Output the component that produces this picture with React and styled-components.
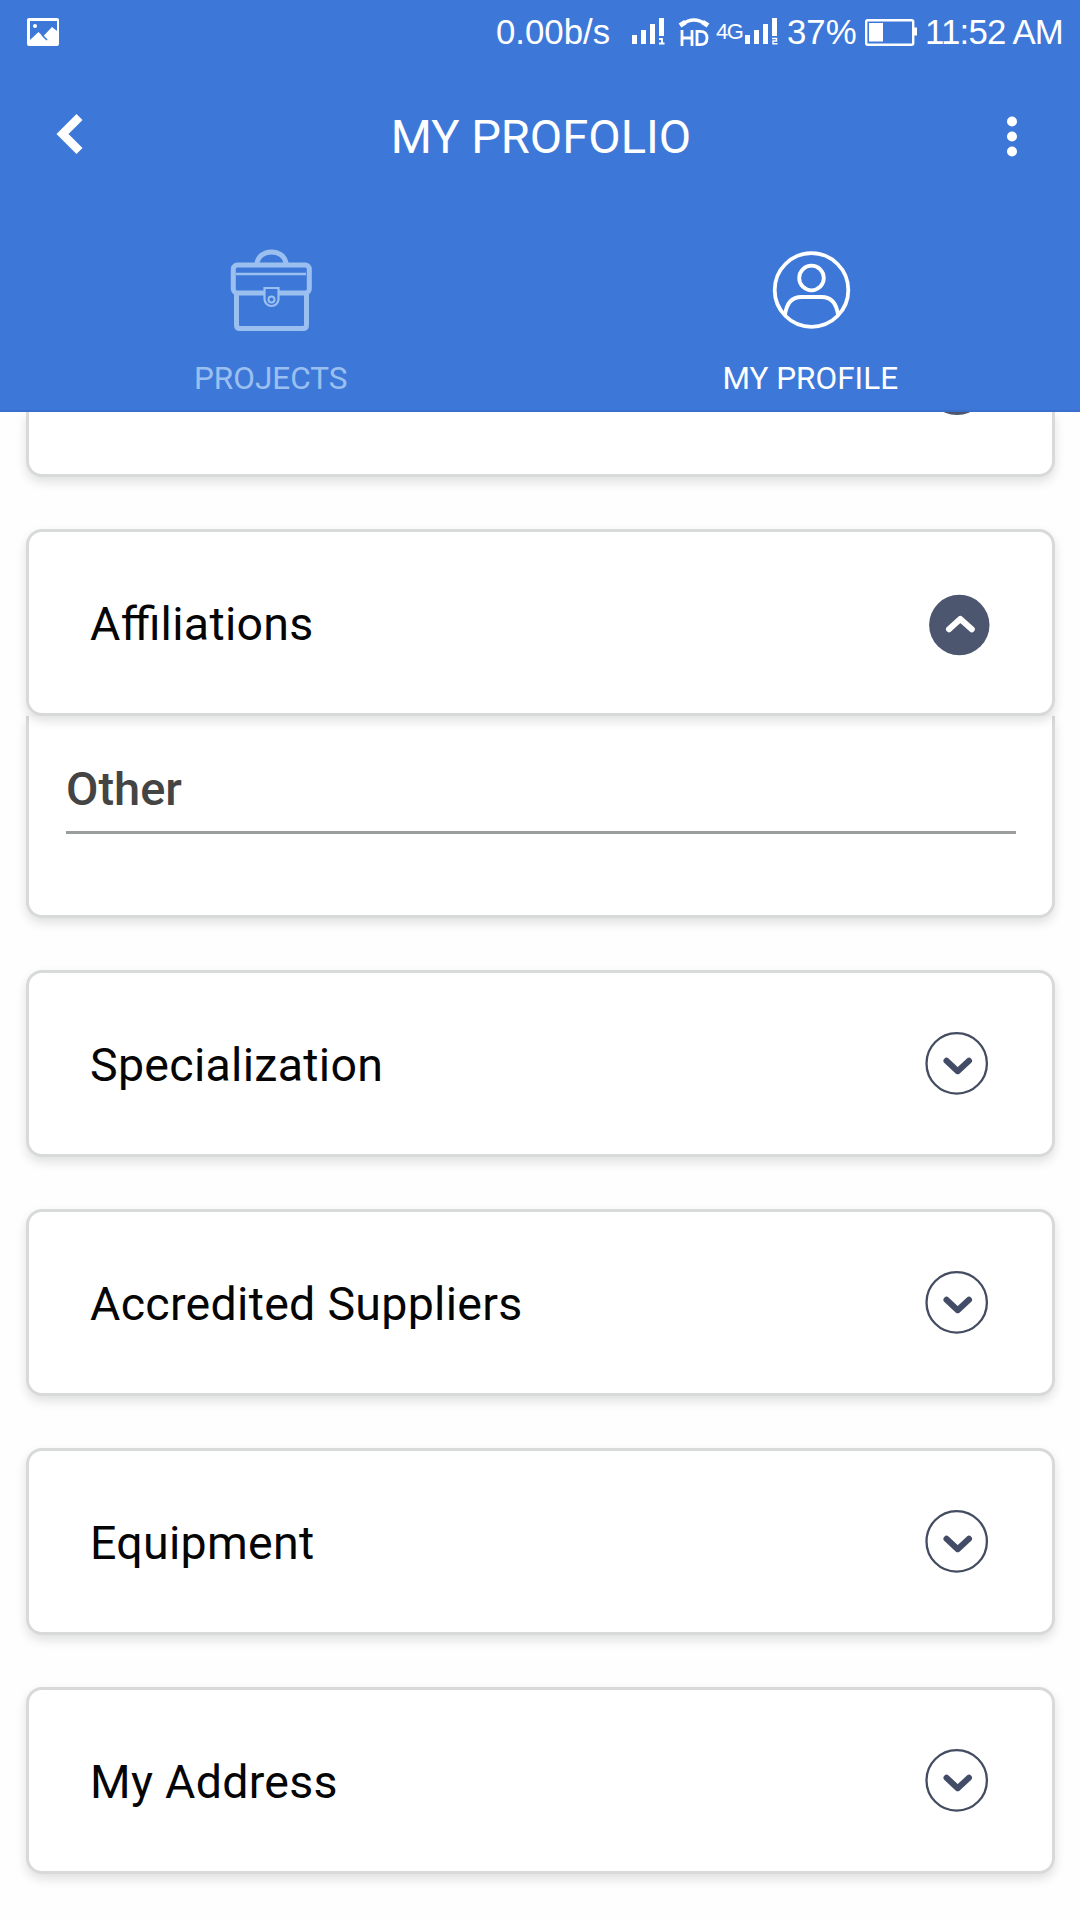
import React from 'react';
import styled, { createGlobalStyle } from 'styled-components';

const Global = createGlobalStyle`
  body { margin: 0; background: #fefefe; font-family: Roboto, sans-serif; }
  * { box-sizing: border-box; }
`;

const Screen = styled.div`
  width: 1080px;
  height: 1920px;
  overflow: hidden;
  display: flex;
  flex-direction: column;
`;

const Header = styled.header`
  flex: none;
  height: 412px;
  background: #3d78d9;
  border-bottom: 2px solid #3a70cd;
  color: #fff;
  display: flex;
  flex-direction: column;
`;

const StatusBar = styled.div`
  height: 64px;
  display: flex;
  align-items: center;
  padding: 0 17px 0 27px;
`;

const StatusText = styled.span`
  font: ${p => p.$size || 34.8}px/64px "Liberation Sans", Arial, sans-serif;
  letter-spacing: ${p => p.$spacing || 0}px;
  white-space: nowrap;
  width: ${p => p.$width}px;
  margin-left: ${p => p.$gap || 0}px;
`;

const StatusIcon = styled.svg`
  flex: none;
  display: block;
  margin-left: ${p => p.$gap || 0}px;
`;

const Spacer = styled.div`
  flex: 1;
`;

const TitleBar = styled.div`
  height: 146px;
  display: grid;
  grid-template-columns: 140px 1fr 140px;
  align-items: center;
`;

const Title = styled.h1`
  margin: 0;
  padding-left: 2px;
  text-align: center;
  font-size: 47.1px;
  line-height: 56px;
  font-weight: 400;
`;

const IconButton = styled.button`
  border: 0;
  padding: 0;
  background: none;
  color: inherit;
  display: block;
  width: 140px;
  height: 146px;
  svg { display: block; }
`;

const Tabs = styled.nav`
  flex: 1;
  display: grid;
  grid-template-columns: 1fr 1fr;
  padding-left: 1px;
`;

const Tab = styled.div`
  color: ${p => (p.$active ? '#fff' : '#9bc0ef')};
  display: flex;
  flex-direction: column;
  align-items: center;
  padding-top: 38px;
  font-size: 31.5px;
  line-height: 40px;
  gap: 27px;
  svg { display: block; }
`;

const List = styled.main`
  flex: 1;
  display: flex;
  flex-direction: column;
  padding: 0 25px 0 26px;
`;

const Surface = styled.div`
  background: #fff;
  border: 3px solid #d8d9d9;
  border-radius: 16px;
  box-shadow: 0 5px 11px rgba(0, 0, 0, 0.12);
`;

const CardTail = styled(Surface)`
  flex: none;
  height: 65px;
  border-top: 0;
  border-radius: 0 0 16px 16px;
  padding-left: 894px;
  svg { display: block; }
`;

const Row = styled(Surface)`
  position: relative;
  flex: none;
  height: 187px;
  margin-top: 52px;
  display: flex;
  align-items: center;
  justify-content: space-between;
  padding: 2px 62px 0 61px;
  font-size: 46.5px;
  letter-spacing: 0.3px;
  font-feature-settings: "liga" 1;
  color: #050505;
  svg { display: block; overflow: visible; }
`;

const Panel = styled(Surface)`
  flex: none;
  height: 202px;
  border-top: 0;
  border-radius: 0 0 16px 16px;
  padding: 42px 36px 0 37px;
`;

const Field = styled.div`
  height: 76px;
  border-bottom: 3px solid #9a9e9d;
  color: #444;
  font-weight: 500;
  font-size: 47px;
  line-height: 62px;
`;

const signal = 'M0 17h5v9H0zM9 12h5v14H9zM18 6h5v20h-5zM27 0h5v18h-5z';

function Signal({ sim, gap }) {
  return (
    <StatusIcon $gap={gap} width="33" height="28" viewBox="0 0 33 28">
      <path d={signal} fill="#fff" />
      {sim === 1
        ? <path d="M27 21h3v4.500M27 25.500h5.500" fill="none" stroke="#fff" strokeWidth="1.8" />
        : <path d="M27 20.500h4.500v2.500H28v2.800h4.500" fill="none" stroke="#fff" strokeWidth="1.4" />}
    </StatusIcon>
  );
}

function Toggle({ open }) {
  return open ? (
    <svg width="62" height="63" viewBox="0 0 62 63">
      <circle cx="31.3" cy="33" r="30.2" fill="#4c566e" />
      <path d="M21 37.300 32.300 27l11.500 10.300" fill="none" stroke="#fff" strokeWidth="6" strokeLinecap="round" strokeLinejoin="round" />
    </svg>
  ) : (
    <svg width="64" height="63" viewBox="0 0 64 63">
      <circle cx="30.7" cy="30.4" r="30.2" fill="none" stroke="#434c60" strokeWidth="2.3" />
      <path d="M20.500 27.700 31.700 38.200 43 27.700" fill="none" stroke="#434c66" strokeWidth="6" strokeLinecap="round" strokeLinejoin="round" />
    </svg>
  );
}

const sections = ['Specialization', 'Accredited Suppliers', 'Equipment', 'My Address'];

export default function App() {
  return (
    <Screen>
      <Global />
      <Header>
        <StatusBar>
          <StatusIcon width="32" height="28" viewBox="0 0 32 28">
            <path fillRule="evenodd" fill="#fff" d="M2 0h28q2 0 2 2v24q0 2-2 2H2q-2 0-2-2V2q0-2 2-2zM3 3v19l8.5-8 4.5 4.5 9-9.5 5 4V3z" />
            <circle cx="8" cy="8" r="2" fill="#fff" />
            <path d="m15 17 5 5" stroke="#3d78d9" strokeWidth="1.6" />
          </StatusIcon>
          <Spacer />
          <StatusText $width={115}>0.00b/s</StatusText>
          <Signal sim={1} gap={21} />
          <StatusIcon $gap={13} width="32" height="29" viewBox="0 0 32 29" fill="none" stroke="#fff">
            <path d="M4 6.500Q16-2.500 28 6.500" strokeWidth="3.4" />
            <path d="m2 7.500 5.500-3.500M24.500 4l5.500 3.500" strokeWidth="5" />
            <path d="M4 12v16M14 12v16M4 20h10M19 13.300h3q7 0 7 6.700t-7 6.700h-3z" strokeWidth="2.8" />
          </StatusIcon>
          <StatusText $size={22} $width={28} $gap={6} $spacing={-1.4}>4G</StatusText>
          <Signal sim={2} gap={1} />
          <StatusText $width={70} $gap={9}>37%</StatusText>
          <StatusIcon $gap={8} width="52" height="27" viewBox="0 0 52 27">
            <rect x="1.2" y="1.2" width="47" height="24.6" rx="1.5" fill="none" stroke="#fff" strokeWidth="2.4" />
            <path d="M4 4h14v18.500H4zM49 8.500h3v8h-3z" fill="#fff" />
          </StatusIcon>
          <StatusText $width={138} $gap={8} $spacing={-0.8}>11:52 AM</StatusText>
        </StatusBar>
        <TitleBar>
          <IconButton aria-label="Back">
            <svg width="140" height="146" viewBox="0 0 140 146">
              <path d="M79.5 53 62.500 70l17 17" fill="none" stroke="#fff" strokeWidth="8.500" />
            </svg>
          </IconButton>
          <Title>MY PROFOLIO</Title>
          <IconButton aria-label="More">
            <svg width="140" height="146" viewBox="0 0 140 146" fill="#fff">
              <circle cx="72" cy="57.500" r="5" /><circle cx="72" cy="72.500" r="5" /><circle cx="72" cy="87.500" r="5" />
            </svg>
          </IconButton>
        </TitleBar>
        <Tabs>
          <Tab>
            <svg width="84" height="84" viewBox="0 0 84 84" fill="none" stroke="currentColor">
              <path d="M28 15.500C30 0 55 0 57 15.500" strokeWidth="5" />
              <rect x="4.300" y="17" width="76" height="28" rx="4" strokeWidth="5" />
              <path d="M7 26h70" strokeWidth="2.500" />
              <path d="M7.500 44v33q0 3.500 3.500 3.500h63q3.500 0 3.500-3.500V44" strokeWidth="5" />
              <path d="M35.500 40h14v11a7 7 0 0 1-14 0z" fill="#3d78d9" strokeWidth="2.200" />
              <circle cx="42.500" cy="51.500" r="3" strokeWidth="2" />
            </svg>
            PROJECTS
          </Tab>
          <Tab $active>
            <svg width="84" height="84" viewBox="-1.500 0 84 84" fill="none" stroke="currentColor" strokeWidth="3.800">
              <circle cx="42" cy="42" r="36.800" />
              <circle cx="42" cy="30" r="12.300" />
              <path d="M15.500 67C17 55 23 49 32 49h20c9 0 15 6 16.500 18" />
            </svg>
            MY PROFILE
          </Tab>
        </Tabs>
      </Header>
      <List>
        <CardTail>
          <svg width="64" height="3" viewBox="0 59 64 3">
            <circle cx="34" cy="31" r="31" fill="#4c566e" />
          </svg>
        </CardTail>
        <Row>Affiliations<Toggle open /></Row>
        <Panel><Field>Other</Field></Panel>
        {sections.map(name => <Row key={name}>{name}<Toggle /></Row>)}
      </List>
    </Screen>
  );
}
